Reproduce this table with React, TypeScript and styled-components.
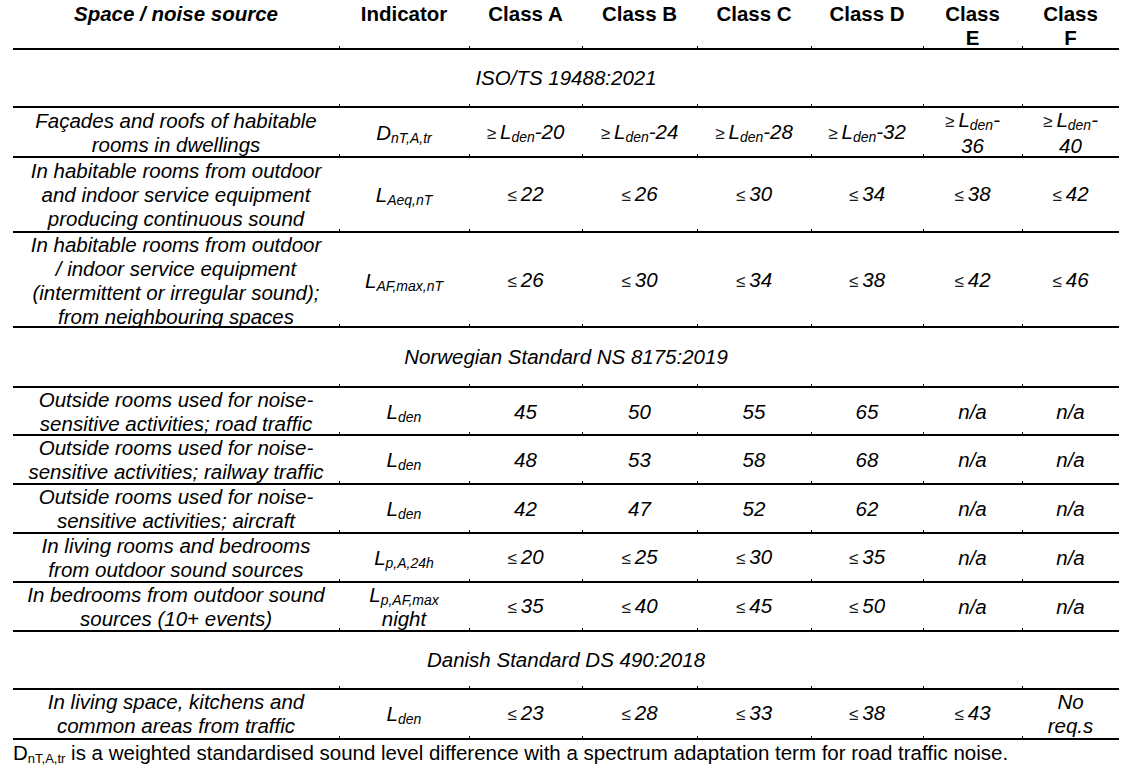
import React from "react";
import styled, { createGlobalStyle } from "styled-components";

const COLS = [326, 130, 113, 115, 114, 112, 99, 97];
const LINE = 2;

const tickStops = (() => {
  let x = 0;
  const parts: string[] = [];
  COLS.slice(0, -1).forEach((w) => {
    x += w;
    parts.push(`linear-gradient(#000, #000) ${x}px 100% / 1px 2px no-repeat`);
  });
  return parts.join(", ");
})();

const Global = createGlobalStyle`
  html, body { margin: 0; padding: 0; background: #fff; }
  body {
    font-family: "Liberation Sans", Arial, sans-serif;
    font-size: 20.5px;
    line-height: 24px;
    color: #000;
  }
`;

const Page = styled.div`
  padding: 0 0 0 13px;
  width: 1106px;
`;

const Table = styled.div`
  display: flex;
  flex-direction: column;
`;

const Row = styled.div<{ $h: number }>`
  display: grid;
  grid-template-columns: ${COLS.map((c) => c + "px").join(" ")};
  height: ${(p) => p.$h}px;
  box-sizing: border-box;
  border-bottom: ${LINE}px solid #000;
  background: ${tickStops};
`;

const HeadCell = styled.div<{ $italic?: boolean }>`
  font-weight: bold;
  font-style: ${(p) => (p.$italic ? "italic" : "normal")};
  text-align: center;
  padding-top: 2px;
  white-space: nowrap;
`;

const TitleCell = styled.div`
  grid-column: 1 / -1;
  display: flex;
  align-items: center;
  justify-content: center;
  font-style: italic;
  padding-bottom: 1px;
`;

const Cell = styled.div`
  display: flex;
  align-items: center;
  justify-content: center;
  text-align: center;
  font-style: italic;
  white-space: nowrap;
`;

const Sub = styled.sub`
  font-size: 14px;
  line-height: 0;
  vertical-align: -3px;
`;

const Rel = styled.span`
  font-style: normal;
  font-size: 17px;
  margin-right: 4px;
  color: #1a1a1a;
`;

const Note = styled.div`
  padding-top: 1px;
  white-space: nowrap;
`;

const NoteSub = styled.sub`
  font-size: 13px;
  line-height: 0;
  vertical-align: -3px;
`;

const le = (n: string) => (
  <>
    <Rel>≤</Rel>
    {n}
  </>
);

const Lden = () => (
  <>
    L<Sub>den</Sub>
  </>
);

const geL = (n: string) => (
  <>
    <Rel>≥</Rel>
    <Lden />-{n}
  </>
);

const geLWrap = (n: string) => (
  <>
    <Rel>≥</Rel>
    <Lden />-<br />
    {n}
  </>
);

type DataRow = {
  h: number;
  desc: string[];
  ind: React.ReactNode;
  vals: React.ReactNode[];
};

type Section = { title: string; h: number; rows: DataRow[] };

const sections: Section[] = [
  {
    title: "ISO/TS 19488:2021",
    h: 58,
    rows: [
      {
        h: 50,
        desc: ["Façades and roofs of habitable", "rooms in dwellings"],
        ind: (
          <>
            D<Sub>nT,A,tr</Sub>
          </>
        ),
        vals: [geL("20"), geL("24"), geL("28"), geL("32"), geLWrap("36"), geLWrap("40")],
      },
      {
        h: 75,
        desc: [
          "In habitable rooms from outdoor",
          "and indoor service equipment",
          "producing continuous sound",
        ],
        ind: (
          <>
            L<Sub>Aeq,nT</Sub>
          </>
        ),
        vals: [le("22"), le("26"), le("30"), le("34"), le("38"), le("42")],
      },
      {
        h: 95,
        desc: [
          "In habitable rooms from outdoor",
          "/ indoor service equipment",
          "(intermittent or irregular sound);",
          "from neighbouring spaces",
        ],
        ind: (
          <>
            L<Sub>AF,max,nT</Sub>
          </>
        ),
        vals: [le("26"), le("30"), le("34"), le("38"), le("42"), le("46")],
      },
    ],
  },
  {
    title: "Norwegian Standard NS 8175:2019",
    h: 60,
    rows: [
      {
        h: 48,
        desc: ["Outside rooms used for noise-", "sensitive activities; road traffic"],
        ind: <Lden />,
        vals: ["45", "50", "55", "65", "n/a", "n/a"],
      },
      {
        h: 49,
        desc: ["Outside rooms used for noise-", "sensitive activities; railway traffic"],
        ind: <Lden />,
        vals: ["48", "53", "58", "68", "n/a", "n/a"],
      },
      {
        h: 49,
        desc: ["Outside rooms used for noise-", "sensitive activities; aircraft"],
        ind: <Lden />,
        vals: ["42", "47", "52", "62", "n/a", "n/a"],
      },
      {
        h: 49,
        desc: ["In living rooms and bedrooms", "from outdoor sound sources"],
        ind: (
          <>
            L<Sub>p,A,24h</Sub>
          </>
        ),
        vals: [le("20"), le("25"), le("30"), le("35"), "n/a", "n/a"],
      },
      {
        h: 49,
        desc: ["In bedrooms from outdoor sound", "sources (10+ events)"],
        ind: (
          <>
            L<Sub>p,AF,max</Sub>
            <br />
            night
          </>
        ),
        vals: [le("35"), le("40"), le("45"), le("50"), "n/a", "n/a"],
      },
    ],
  },
  {
    title: "Danish Standard DS 490:2018",
    h: 58,
    rows: [
      {
        h: 50,
        desc: ["In living space, kitchens and", "common areas from traffic"],
        ind: <Lden />,
        vals: [
          le("23"),
          le("28"),
          le("33"),
          le("38"),
          le("43"),
          <>
            No
            <br />
            req.s
          </>,
        ],
      },
    ],
  },
];

const headers = ["Indicator", "Class A", "Class B", "Class C", "Class D"];

export default function App() {
  return (
    <Page>
      <Global />
      <Table>
        <Row $h={50}>
          <HeadCell $italic>Space / noise source</HeadCell>
          {headers.map((h) => (
            <HeadCell key={h}>{h}</HeadCell>
          ))}
          <HeadCell>
            Class
            <br />E
          </HeadCell>
          <HeadCell>
            Class
            <br />F
          </HeadCell>
        </Row>
        {sections.map((s) => (
          <React.Fragment key={s.title}>
            <Row $h={s.h}>
              <TitleCell>{s.title}</TitleCell>
            </Row>
            {s.rows.map((r, i) => (
              <Row $h={r.h} key={i}>
                <Cell>
                  <div>
                    {r.desc.map((d, j) => (
                      <React.Fragment key={j}>
                        {j > 0 && <br />}
                        {d}
                      </React.Fragment>
                    ))}
                  </div>
                </Cell>
                <Cell>
                  <div>{r.ind}</div>
                </Cell>
                {r.vals.map((v, k) => (
                  <Cell key={k}>
                    <div>{v}</div>
                  </Cell>
                ))}
              </Row>
            ))}
          </React.Fragment>
        ))}
      </Table>
      <Note>
        D<NoteSub>nT,A,tr</NoteSub> is a weighted standardised sound level difference with a
        spectrum adaptation term for road traffic noise.
      </Note>
    </Page>
  );
}
